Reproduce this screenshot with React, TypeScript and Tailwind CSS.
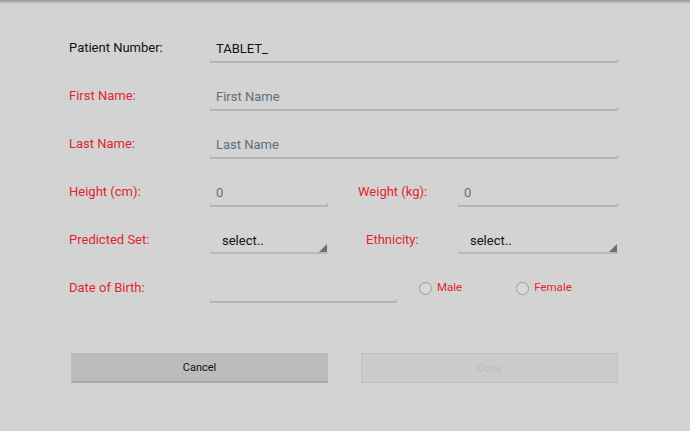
import React from 'react'

const red = 'text-[#e0262b]'

const Underline = () => (
    <div className="h-[4px] border-x border-b-2 border-[#b6b6b6]" />
)

const Field = ({ value, placeholder, width }: { value?: string; placeholder?: string; width: string }) => (
    <div className={`${width} flex flex-col mt-[5px]`}>
        <span className={`pl-[6px] h-[20px] leading-[20px] text-[13px] ${value ? 'text-[#111]' : 'text-[#5d6f7d]'}`}>
            {value ?? placeholder}
        </span>
        <Underline />
    </div>
)

const Select = ({ width }: { width: string }) => (
    <div className={`${width} flex flex-col mt-[5px]`}>
        <div className="flex items-end justify-between h-[20px]">
            <span className="pl-[12px] leading-[20px] text-[13px] text-[#111]">select..</span>
            <svg width="8" height="8" viewBox="0 0 8 8" className="mb-[-1px] mr-[1px]">
                <polygon points="8,0 8,8 0,8" fill="#6f6f6f" />
            </svg>
        </div>
        <div className="h-[3px] border-b-2 border-[#bababa]" />
    </div>
)

const Label = ({ children, className = '' }: { children: React.ReactNode; className?: string }) => (
    <span className={`text-[13px] ${className}`}>{children}</span>
)

const Radio = ({ label }: { label: string }) => (
    <div className="flex items-center gap-[5px]">
        <span className="w-[13px] h-[13px] rounded-full border border-[#9c9c9c] bg-[#d8d8d8]" />
        <span className={`text-[11.5px] ${red}`}>{label}</span>
    </div>
)

const App = () => {
    return (
        <div className="w-[690px] h-[431px] bg-[#d3d3d3] overflow-hidden font-['Roboto',sans-serif]">
            <div className="h-[2px] bg-[#a2a2a2]" />
            <div className="h-[2px] bg-[#c7c7c7]" />

            <div className="pt-[20px] pl-[69px] flex flex-col">

                <div className="flex items-center h-12">
                    <Label className="w-[141px] text-[#111]">Patient Number:</Label>
                    <Field value="TABLET_" width="w-[408px]" />
                </div>

                <div className="flex items-center h-12">
                    <Label className={`w-[141px] ${red}`}>First Name:</Label>
                    <Field placeholder="First Name" width="w-[408px]" />
                </div>

                <div className="flex items-center h-12">
                    <Label className={`w-[141px] ${red}`}>Last Name:</Label>
                    <Field placeholder="Last Name" width="w-[408px]" />
                </div>

                <div className="flex items-center h-12">
                    <Label className={`w-[141px] ${red}`}>Height (cm):</Label>
                    <Field placeholder="0" width="w-[118px]" />
                    <Label className={`w-[100px] ml-[30px] ${red}`}>Weight (kg):</Label>
                    <Field placeholder="0" width="w-[160px]" />
                </div>

                <div className="flex items-center h-12">
                    <Label className={`w-[141px] ${red}`}>Predicted Set:</Label>
                    <Select width="w-[118px]" />
                    <Label className={`w-[92px] ml-[38px] ${red}`}>Ethnicity:</Label>
                    <Select width="w-[160px]" />
                </div>

                <div className="flex items-center h-12">
                    <Label className={`w-[141px] ${red}`}>Date of Birth:</Label>
                    <div className="w-[187px] flex flex-col mt-[5px]">
                        <div className="h-[20px]" />
                        <Underline />
                    </div>
                    <div className="ml-[22px] flex items-center gap-[54px]">
                        <Radio label="Male" />
                        <Radio label="Female" />
                    </div>
                </div>

            </div>

            <div className="flex gap-[33px] pl-[71px] mt-[41px]">
                <button className="w-[257px] h-[30px] pt-[2px] bg-[#bcbcbc] border-b-2 border-[#a9a9a9] text-[11px] text-[#111]">
                    Cancel
                </button>
                <button className="w-[257px] h-[30px] pt-[2px] bg-[#cbcbcb] border border-[#c0c0c0] text-[11px] text-[#bdbdbd]">
                    Done
                </button>
            </div>
        </div>
    )
}

export default App
